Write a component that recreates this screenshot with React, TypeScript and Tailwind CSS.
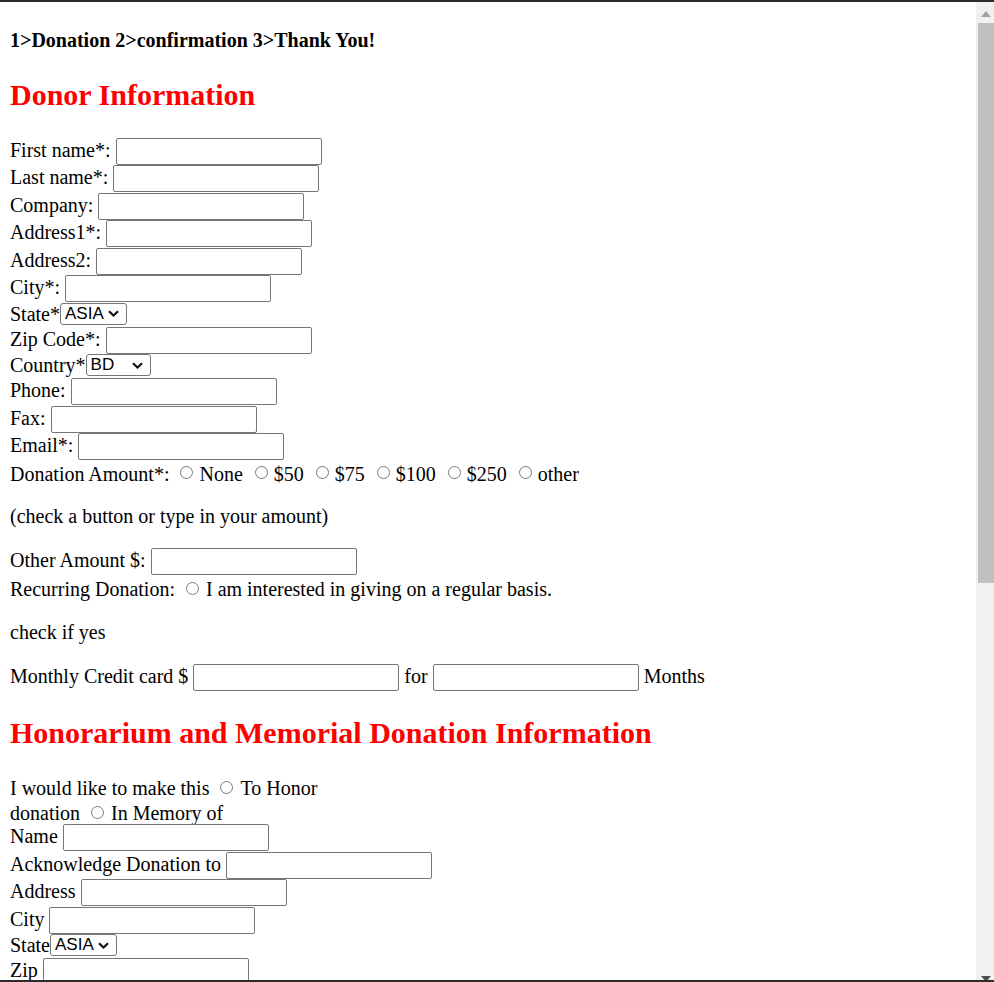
import React from "react";

const Input = ({ className = "" }: { className?: string }) => (
  <input
    type="text"
    readOnly
    className={`block shrink-0 w-[206px] h-[27px] border border-[#767676] rounded-[2px] bg-white outline-none ${className}`}
  />
);

const Radio = ({ className = "" }: { className?: string }) => (
  <span
    className={`block shrink-0 w-[13px] h-[13px] rounded-full border border-[#7a7a7a] bg-white ${className}`}
  />
);

const Chevron = () => (
  <svg width="11" height="7" viewBox="0 0 11 7" className="block">
    <polyline points="1,1.2 5.5,5.5 10,1.2" fill="none" stroke="#111" strokeWidth="2.2" />
  </svg>
);

const Select = ({ value, w }: { value: string; w: string }) => (
  <span
    className={`flex shrink-0 h-[22px] items-center justify-between border border-[#767676] rounded-[3px] bg-white pl-[4px] pr-[7px] ${w}`}
    style={{ fontFamily: '"Liberation Sans", Arial, sans-serif' }}
  >
    <span className="text-[17px] leading-[20px] text-black">{value}</span>
    <Chevron />
  </span>
);

const InputRow = ({ label }: { label: string }) => (
  <div className="flex items-start h-[27.5px]">
    <span className="mt-[1px] whitespace-pre">{label}</span>
    <Input />
  </div>
);

const SelectRow = ({ label, value, w }: { label: string; value: string; w: string }) => (
  <div className="flex items-start h-[24px]">
    <span className="whitespace-pre">{label}</span>
    <Select value={value} w={w} />
  </div>
);

const Opt = ({ text, first }: { text: string; first?: boolean }) => (
  <>
    <Radio className={`mt-[5.5px] ${first ? "ml-[11px]" : "ml-[12px]"}`} />
    <span className="ml-[6px] mt-[2px] whitespace-pre">{text}</span>
  </>
);

export default function App() {
  return (
    <div className="w-[994px] h-[982px] overflow-hidden border-t-2 border-b-[2.5px] border-[#2b2b2b] bg-white flex">
      <div
        className="flex-1 overflow-hidden pl-[10px] text-[20px] leading-[23px] text-black"
        style={{ fontFamily: '"Liberation Serif", "Times New Roman", serif' }}
      >
        <div className="mt-[27px] font-bold whitespace-pre">1&gt;Donation 2&gt;confirmation 3&gt;Thank You!</div>
        <h2 className="mt-[26px] text-[30px] leading-[34.5px] font-bold text-[#ff0000]">Donor Information</h2>

        <div className="mt-[25px]">
          <InputRow label={"First name*:\u00a0"} />
          <InputRow label={"Last name*:\u00a0"} />
          <InputRow label={"Company:\u00a0"} />
          <InputRow label={"Address1*:\u00a0"} />
          <InputRow label={"Address2:\u00a0"} />
          <InputRow label={"City*:\u00a0"} />
          <SelectRow label="State*" value="ASIA" w="w-[67px]" />
          <InputRow label={"Zip Code*:\u00a0"} />
          <SelectRow label="Country*" value="BD" w="w-[65px]" />
          <InputRow label={"Phone:\u00a0"} />
          <InputRow label={"Fax:\u00a0"} />
          <InputRow label={"Email*:\u00a0"} />

          <div className="flex items-start h-[24px]">
            <span className="mt-[2px] whitespace-pre">Donation Amount*:</span>
            <Opt text="None" first />
            <Opt text="$50" />
            <Opt text="$75" />
            <Opt text="$100" />
            <Opt text="$250" />
            <Opt text="other" />
          </div>

          <p className="mt-[20px]">(check a button or type in your amount)</p>

          <div className="mt-[20px]">
            <InputRow label={"Other Amount $:\u00a0"} />
          </div>
          <div className="flex items-start h-[26px]">
            <span className="mt-[3px] whitespace-pre">Recurring Donation:</span>
            <Radio className="mt-[6.5px] ml-[11px]" />
            <span className="ml-[7px] mt-[3px] whitespace-pre">I am interested in giving on a regular basis.</span>
          </div>

          <p className="mt-[20px]">check if yes</p>

          <div className="mt-[20px] flex items-start h-[27.5px]">
            <span className="mt-[1px] whitespace-pre">{"Monthly Credit card $\u00a0"}</span>
            <Input />
            <span className="mt-[1px] whitespace-pre">{"\u00a0for\u00a0"}</span>
            <Input />
            <span className="mt-[1px] whitespace-pre">{"\u00a0Months"}</span>
          </div>
        </div>

        <h2 className="mt-[24px] text-[30px] leading-[34.5px] font-bold text-[#ff0000]">
          Honorarium and Memorial Donation Information
        </h2>

        <div className="mt-[25px]">
          <div className="flex items-start h-[24px]">
            <span className="mt-[2px] whitespace-pre">I would like to make this</span>
            <Radio className="mt-[5.5px] ml-[11px]" />
            <span className="ml-[7px] mt-[2px] whitespace-pre">To Honor</span>
          </div>
          <div className="flex items-start h-[25px]">
            <span className="mt-[3px] whitespace-pre">donation</span>
            <Radio className="mt-[6.5px] ml-[11px]" />
            <span className="ml-[7px] mt-[3px] whitespace-pre">In Memory of</span>
          </div>
          <InputRow label={"Name\u00a0"} />
          <InputRow label={"Acknowledge Donation to\u00a0"} />
          <InputRow label={"Address\u00a0"} />
          <InputRow label={"City\u00a0"} />
          <SelectRow label="State" value="ASIA" w="w-[67px]" />
          <InputRow label={"Zip\u00a0"} />
        </div>
      </div>

      <div className="w-[18px] shrink-0 bg-[#f1f1f1] relative">
        <svg width="10" height="6" viewBox="0 0 10 6" className="absolute left-[5px] top-[9px]">
          <polygon points="5,0 10,6 0,6" fill="#a3a3a3" />
        </svg>
        <div className="absolute left-[2px] right-0 top-[21px] h-[560px] bg-[#c1c1c1]" />
        <svg width="10" height="6" viewBox="0 0 10 6" className="absolute left-[5px] bottom-[-2px]">
          <polygon points="0,0 10,0 5,6" fill="#505050" />
        </svg>
      </div>
    </div>
  );
}
